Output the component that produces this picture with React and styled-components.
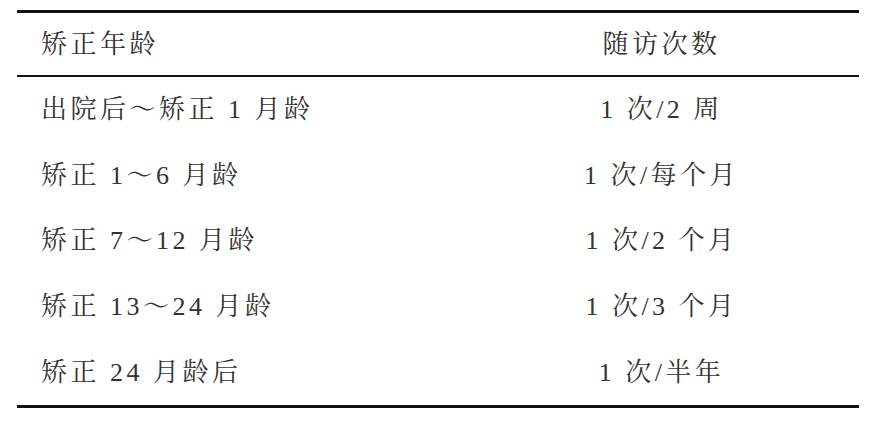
import React from 'react'
import styled, { createGlobalStyle } from 'styled-components'

const GlobalStyle = createGlobalStyle`
  html, body {
    margin: 0;
    padding: 0;
    background: #fff;
  }
`

const rows = [
  ['出院后～矫正 1 月龄', '1 次/2 周'],
  ['矫正 1～6 月龄', '1 次/每个月'],
  ['矫正 7～12 月龄', '1 次/2 个月'],
  ['矫正 13～24 月龄', '1 次/3 个月'],
  ['矫正 24 月龄后', '1 次/半年'],
]

const Page = styled.div`
  padding: 10px 17px 0 17px;
  width: 842px;
`

const Table = styled.div`
  border-top: 3px solid #111;
  border-bottom: 3px solid #111;
  font-family: "Liberation Serif", "Noto Serif CJK SC", "Noto Sans CJK SC", serif;
  font-size: 26px;
  letter-spacing: 3.5px;
  line-height: 30px;
  color: #333;
`

const Row = styled.div`
  display: grid;
  grid-template-columns: 447px 1fr;
  align-items: center;
  height: ${p => (p.$head ? '62px' : '65.6px')};
  border-bottom: ${p => (p.$head ? '2px solid #111' : 'none')};
`

const Cell = styled.div`
  padding-left: ${p => (p.$center ? '0' : '24px')};
  padding-top: 1px;
  text-align: ${p => (p.$center ? 'center' : 'left')};
  white-space: nowrap;
`

export default function App() {
  return (
    <Page>
      <GlobalStyle />
      <Table>
        <Row $head>
          <Cell>矫正年龄</Cell>
          <Cell $center>随访次数</Cell>
        </Row>
        {rows.map(([age, freq], i) => (
          <Row key={i}>
            <Cell>{age}</Cell>
            <Cell $center>{freq}</Cell>
          </Row>
        ))}
      </Table>
    </Page>
  )
}
